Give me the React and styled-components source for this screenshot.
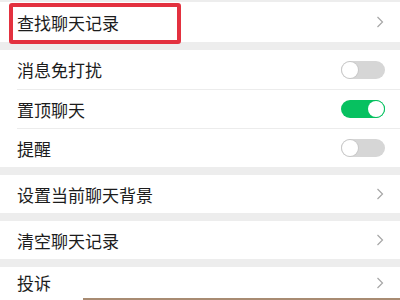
import React from "react";
import styled, { createGlobalStyle } from "styled-components";

const Global = createGlobalStyle`
  html, body { margin: 0; padding: 0; }
  body {
    background: #ededed;
    font-family: "Noto Sans CJK SC", "Noto Sans", sans-serif;
    width: 400px;
    height: 300px;
    overflow: hidden;
  }
`;

const Page = styled.div`
  width: 400px;
  height: 300px;
  display: flex;
  flex-direction: column;
  padding-top: 2px;
  box-sizing: border-box;
  overflow: hidden;
  background: #ededed;
`;

const Group = styled.div`
  background: #ffffff;
  margin-bottom: 8px;
  display: flex;
  flex-direction: column;
  position: relative;
`;

const Row = styled.div`
  height: ${(p) => p.$h || 38}px;
  display: flex;
  align-items: center;
  justify-content: space-between;
  padding: 0 15px 0 17px;
  box-sizing: border-box;
  font-size: 17px;
  color: #1c1c1c;
  flex-shrink: 0;
`;

const Divider = styled.div`
  height: 1px;
  margin-left: 17px;
  background: #ececec;
`;

const Label = styled.span`
  line-height: 1;
  letter-spacing: 0;
`;

const Chevron = styled.svg`
  width: 8px;
  height: 12px;
  margin-right: 1px;
`;

const Track = styled.div`
  width: 44px;
  height: 18px;
  border-radius: 9px;
  background: ${(p) => (p.$on ? "#07c160" : "#d6d6d6")};
  display: flex;
  justify-content: ${(p) => (p.$on ? "flex-end" : "flex-start")};
  align-items: center;
  box-sizing: border-box;
  padding: 0 1px;
`;

const Knob = styled.div`
  width: 16px;
  height: 16px;
  border-radius: 50%;
  background: #fff;
  box-shadow: 0 0 0 1px ${(p) => (p.$on ? "#07c160" : "#c8c8c8")};
`;

const Highlight = styled.div`
  position: absolute;
  left: 9px;
  top: 1px;
  width: 172px;
  height: 41px;
  border: 4px solid #e3313f;
  border-radius: 3px;
  box-sizing: border-box;
  pointer-events: none;
`;

const BottomStrip = styled.div`
  height: 2px;
  margin-left: 83px;
  background: #a88b72;
`;

const Arrow = () => (
  <Chevron viewBox="0 0 8 12">
    <path d="M1.5 1 L6.5 6 L1.5 11" fill="none" stroke="#a6a6a6" strokeWidth="1.2" />
  </Chevron>
);

const Switch = ({ on }) => (
  <Track $on={on}>
    <Knob $on={on} />
  </Track>
);

export default function App() {
  return (
    <>
      <Global />
      <Page>
        <Group>
          <Row $h={40}>
            <Label>查找聊天记录</Label>
            <Arrow />
          </Row>
          <Highlight />
        </Group>
        <Group>
          <Row $h={39}>
            <Label>消息免打扰</Label>
            <Switch on={false} />
          </Row>
          <Divider />
          <Row>
            <Label>置顶聊天</Label>
            <Switch on={true} />
          </Row>
          <Divider />
          <Row>
            <Label>提醒</Label>
            <Switch on={false} />
          </Row>
        </Group>
        <Group>
          <Row>
            <Label>设置当前聊天背景</Label>
            <Arrow />
          </Row>
        </Group>
        <Group>
          <Row>
            <Label>清空聊天记录</Label>
            <Arrow />
          </Row>
        </Group>
        <Group>
          <Row $h={31}>
            <Label>投诉</Label>
            <Arrow />
          </Row>
          <BottomStrip />
        </Group>
      </Page>
    </>
  );
}
